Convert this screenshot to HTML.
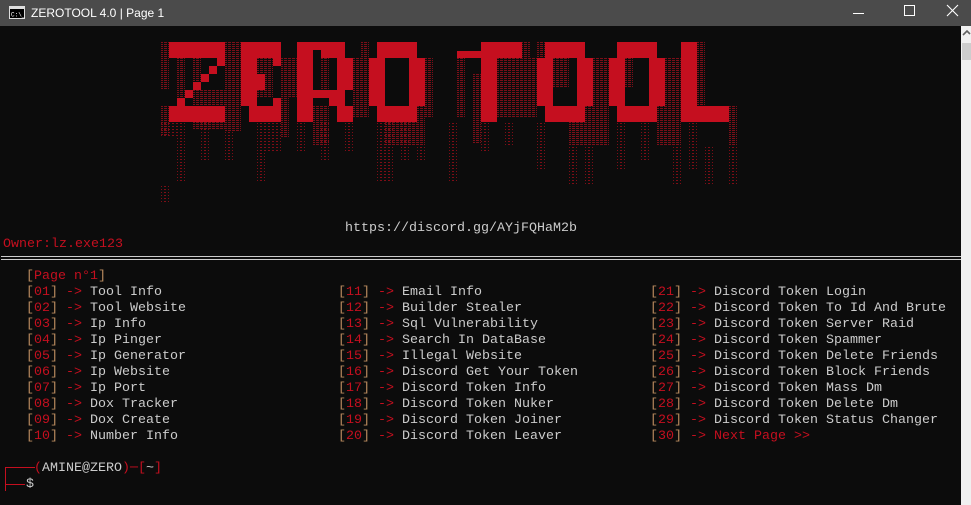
<!DOCTYPE html>
<html><head><meta charset="utf-8"><style>
*{margin:0;padding:0;box-sizing:border-box}
body{width:971px;height:505px;background:#0c0c0c;overflow:hidden;position:relative;font-family:"Liberation Mono",monospace;font-size:13.33px;line-height:16px;color:#cccccc}
#title{position:absolute;left:0;top:0;width:971px;height:26px;background:#4b4b4b;color:#fff;font-family:"Liberation Sans",sans-serif;font-size:12px}
#title .t{position:absolute;left:31px;top:5px}
#sb{position:absolute;left:961px;top:26px;width:10px;height:479px;background:#f0f0f0}
#sb .th{position:absolute;left:1px;top:17px;width:9px;height:17px;background:#cdcdcd}
.row{position:absolute;white-space:pre;height:16px}
.r{color:#c50f1f}.b{color:#b88a5e}.w{color:#cccccc}
.sep{position:absolute;left:1px;width:960px;height:1px;background:#cccccc}
</style></head><body>
<div id="title">
<svg style="position:absolute;left:9px;top:6px" width="16" height="13"><rect x="0.5" y="0.5" width="15" height="12" fill="#000" stroke="#ddd"/><rect x="1" y="1" width="14" height="2" fill="#ddd"/><text x="2" y="10.5" font-size="6" fill="#fff" font-family="Liberation Mono">C:\_</text></svg>
<span class="t">ZEROTOOL 4.0 | Page 1</span>
<svg style="position:absolute;left:852px;top:6px" width="14" height="14"><line x1="1" y1="7.5" x2="12" y2="7.5" stroke="#fff"/></svg>
<svg style="position:absolute;left:902px;top:4px" width="14" height="14"><rect x="2.5" y="1.5" width="10" height="10" fill="none" stroke="#fff"/></svg>
<svg style="position:absolute;left:946px;top:4px" width="14" height="14"><path d="M1 1L12 12M12 1L1 12" stroke="#fff" stroke-width="1.1"/></svg>
</div>
<div id="sb"><svg style="position:absolute;left:1px;top:3px" width="9" height="8"><path d="M1 6L5 2L8 5" stroke="#606060" stroke-width="1.6" fill="none"/></svg><div class="th"></div></div>

<svg style="position:absolute;left:0;top:26px" width="961" height="200" viewBox="0 26 961 200">
<defs>
<pattern id="p" width="4" height="2" patternUnits="userSpaceOnUse"><rect width="3" height="1" fill="#a0101c"/></pattern>
<pattern id="q" width="4" height="3" patternUnits="userSpaceOnUse"><rect width="2" height="1" fill="#8a0e18"/></pattern>
</defs>
<g fill="url(#p)" opacity="0.75">
<rect x="161" y="42" width="8" height="48"/><rect x="161" y="106" width="8" height="30"/>
<rect x="177" y="58" width="8" height="40"/><rect x="193" y="58" width="8" height="24"/><rect x="193" y="90" width="32" height="40"/>
<rect x="225" y="42" width="16" height="90"/><rect x="257" y="58" width="16" height="40"/><rect x="281" y="58" width="8" height="80"/>
<rect x="289" y="58" width="8" height="40"/><rect x="313" y="106" width="16" height="40"/><rect x="321" y="58" width="8" height="40"/>
<rect x="353" y="58" width="16" height="60"/><rect x="361" y="42" width="8" height="16"/><rect x="425" y="58" width="8" height="60"/>
<rect x="385" y="106" width="40" height="40"/><rect x="417" y="90" width="8" height="16"/>
<rect x="457" y="58" width="8" height="60"/><rect x="473" y="74" width="8" height="70"/><rect x="497" y="58" width="16" height="60"/>
<rect x="522" y="42" width="8" height="16"/><rect x="513" y="58" width="24" height="60"/><rect x="537" y="42" width="8" height="16"/>
<rect x="553" y="58" width="16" height="30"/><rect x="569" y="106" width="40" height="40"/><rect x="593" y="58" width="16" height="60"/>
<rect x="625" y="58" width="8" height="30"/><rect x="665" y="58" width="16" height="60"/><rect x="697" y="42" width="8" height="64"/>
<rect x="729" y="106" width="8" height="40"/><rect x="657" y="106" width="24" height="40"/>
</g>
<g fill="url(#q)" opacity="0.9">
<rect x="161" y="122" width="16" height="16"/><rect x="177" y="122" width="8" height="60"/><rect x="201" y="122" width="8" height="40"/>
<rect x="225" y="130" width="8" height="32"/><rect x="257" y="122" width="8" height="60"/><rect x="265" y="122" width="16" height="30"/>
<rect x="297" y="122" width="8" height="30"/><rect x="321" y="122" width="8" height="40"/><rect x="345" y="122" width="8" height="30"/>
<rect x="377" y="122" width="16" height="60"/><rect x="401" y="122" width="8" height="40"/><rect x="417" y="146" width="8" height="16"/>
<rect x="449" y="122" width="8" height="60"/><rect x="481" y="122" width="8" height="30"/><rect x="505" y="122" width="8" height="24"/>
<rect x="537" y="122" width="8" height="48"/><rect x="569" y="146" width="8" height="40"/><rect x="585" y="146" width="8" height="40"/>
<rect x="617" y="122" width="8" height="48"/><rect x="641" y="122" width="8" height="40"/><rect x="673" y="146" width="8" height="40"/>
<rect x="689" y="122" width="8" height="48"/><rect x="705" y="146" width="8" height="40"/><rect x="729" y="146" width="8" height="40"/>
<rect x="161" y="186" width="8" height="16"/>
</g>
<g fill="#c50f1f">
<rect x="169" y="42" width="56" height="16"/><rect x="217" y="58" width="8" height="8"/>
<rect x="209" y="66" width="8" height="8"/><rect x="201" y="74" width="8" height="8"/><rect x="193" y="82" width="8" height="8"/>
<rect x="185" y="90" width="8" height="8"/><rect x="177" y="98" width="8" height="8"/><rect x="169" y="106" width="56" height="16"/>
<rect x="241" y="42" width="40" height="16"/><rect x="273" y="58" width="8" height="8"/>
<rect x="241" y="58" width="16" height="48"/><rect x="241" y="74" width="24" height="16"/>
<rect x="249" y="106" width="32" height="16"/><rect x="273" y="98" width="8" height="8"/>
<rect x="297" y="42" width="48" height="8"/><rect x="297" y="42" width="16" height="80"/>
<rect x="321" y="50" width="24" height="8"/><rect x="337" y="58" width="16" height="32"/>
<rect x="313" y="90" width="32" height="8"/><rect x="329" y="98" width="16" height="8"/><rect x="337" y="106" width="16" height="16"/>
<rect x="377" y="42" width="40" height="16"/><rect x="369" y="58" width="16" height="48"/>
<rect x="409" y="58" width="16" height="48"/><rect x="377" y="106" width="40" height="16"/>
<rect x="481" y="42" width="41" height="16"/><rect x="457" y="51" width="24" height="7"/><rect x="481" y="58" width="16" height="64"/>
<rect x="545" y="42" width="40" height="16"/><rect x="537" y="58" width="16" height="48"/>
<rect x="577" y="58" width="16" height="48"/><rect x="545" y="106" width="40" height="16"/>
<rect x="617" y="42" width="40" height="16"/><rect x="609" y="58" width="16" height="48"/>
<rect x="649" y="58" width="16" height="48"/><rect x="617" y="106" width="40" height="16"/>
<rect x="681" y="42" width="16" height="80"/><rect x="681" y="106" width="48" height="16"/>
</g>
</svg>

<div class="row w" style="left:345px;top:221px">https://discord.gg/AYjFQHaM2b</div>
<div class="row r" style="left:3px;top:237px">Owner:lz.exe123</div>
<div class="sep" style="top:256px"></div><div class="sep" style="top:259px"></div>

<div class="row" style="left:26px;top:269px"><span class="b">[</span><span class="r">Page n°1</span><span class="b">]</span></div>

<div class="row" style="left:26px;top:285px"><span class="b">[</span><span class="r">01</span><span class="b">]</span><span class="r"> -> </span>Tool Info
<span class="b">[</span><span class="r">02</span><span class="b">]</span><span class="r"> -> </span>Tool Website
<span class="b">[</span><span class="r">03</span><span class="b">]</span><span class="r"> -> </span>Ip Info
<span class="b">[</span><span class="r">04</span><span class="b">]</span><span class="r"> -> </span>Ip Pinger
<span class="b">[</span><span class="r">05</span><span class="b">]</span><span class="r"> -> </span>Ip Generator
<span class="b">[</span><span class="r">06</span><span class="b">]</span><span class="r"> -> </span>Ip Website
<span class="b">[</span><span class="r">07</span><span class="b">]</span><span class="r"> -> </span>Ip Port
<span class="b">[</span><span class="r">08</span><span class="b">]</span><span class="r"> -> </span>Dox Tracker
<span class="b">[</span><span class="r">09</span><span class="b">]</span><span class="r"> -> </span>Dox Create
<span class="b">[</span><span class="r">10</span><span class="b">]</span><span class="r"> -> </span>Number Info</div>

<div class="row" style="left:338px;top:285px"><span class="b">[</span><span class="r">11</span><span class="b">]</span><span class="r"> -> </span>Email Info
<span class="b">[</span><span class="r">12</span><span class="b">]</span><span class="r"> -> </span>Builder Stealer
<span class="b">[</span><span class="r">13</span><span class="b">]</span><span class="r"> -> </span>Sql Vulnerability
<span class="b">[</span><span class="r">14</span><span class="b">]</span><span class="r"> -> </span>Search In DataBase
<span class="b">[</span><span class="r">15</span><span class="b">]</span><span class="r"> -> </span>Illegal Website
<span class="b">[</span><span class="r">16</span><span class="b">]</span><span class="r"> -> </span>Discord Get Your Token
<span class="b">[</span><span class="r">17</span><span class="b">]</span><span class="r"> -> </span>Discord Token Info
<span class="b">[</span><span class="r">18</span><span class="b">]</span><span class="r"> -> </span>Discord Token Nuker
<span class="b">[</span><span class="r">19</span><span class="b">]</span><span class="r"> -> </span>Discord Token Joiner
<span class="b">[</span><span class="r">20</span><span class="b">]</span><span class="r"> -> </span>Discord Token Leaver</div>

<div class="row" style="left:650px;top:285px"><span class="b">[</span><span class="r">21</span><span class="b">]</span><span class="r"> -> </span>Discord Token Login
<span class="b">[</span><span class="r">22</span><span class="b">]</span><span class="r"> -> </span>Discord Token To Id And Brute
<span class="b">[</span><span class="r">23</span><span class="b">]</span><span class="r"> -> </span>Discord Token Server Raid
<span class="b">[</span><span class="r">24</span><span class="b">]</span><span class="r"> -> </span>Discord Token Spammer
<span class="b">[</span><span class="r">25</span><span class="b">]</span><span class="r"> -> </span>Discord Token Delete Friends
<span class="b">[</span><span class="r">26</span><span class="b">]</span><span class="r"> -> </span>Discord Token Block Friends
<span class="b">[</span><span class="r">27</span><span class="b">]</span><span class="r"> -> </span>Discord Token Mass Dm
<span class="b">[</span><span class="r">28</span><span class="b">]</span><span class="r"> -> </span>Discord Token Delete Dm
<span class="b">[</span><span class="r">29</span><span class="b">]</span><span class="r"> -> </span>Discord Token Status Changer
<span class="b">[</span><span class="r">30</span><span class="b">]</span><span class="r"> -> Next Page &gt;&gt;</span></div>

<svg style="position:absolute;left:0;top:459px" width="40" height="32"><path d="M5.5 32V8.5H35" stroke="#c50f1f" fill="none"/><path d="M5.5 16V25.5H25" stroke="#c50f1f" fill="none"/></svg>
<div class="row" style="left:34px;top:461px"><span class="r">(</span>AMINE@ZERO<span class="r">)─[</span><span class="w">~</span><span class="r">]</span></div>
<div class="row" style="left:26px;top:477px">$</div>
</body></html>
